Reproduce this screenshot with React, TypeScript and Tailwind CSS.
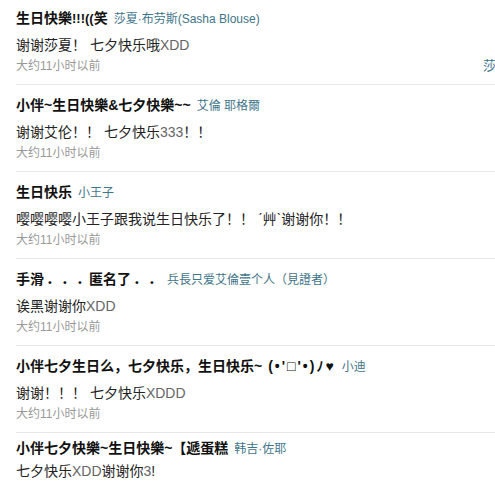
import React from "react";

type Item = {
  title: React.ReactNode;
  name: string;
  body: React.ReactNode;
  first?: boolean;
  last?: boolean;
  extra?: boolean;
};

const G = ({ children }: { children: React.ReactNode }) => (
  <span className="text-[#666]">{children}</span>
);

const Dot = () => <span className="inline-block w-[15px] pl-[2px] text-left">．</span>;

const items: Item[] = [
  {
    title: (
      <>
        生日快樂<span className="text-[13px]">!!!((</span>笑
      </>
    ),
    name: "莎夏·布劳斯(Sasha Blouse)",
    body: (
      <>
        谢谢莎夏！ 七夕快乐哦<G>XDD</G>
      </>
    ),
    first: true,
    extra: true,
  },
  {
    title: "小伴~生日快樂&七夕快樂~~",
    name: "艾倫 耶格爾",
    body: (
      <>
        谢谢艾伦！！ 七夕快乐<G>333</G>！！
      </>
    ),
  },
  {
    title: "生日快乐",
    name: "小王子",
    body: "嘤嘤嘤嘤小王子跟我说生日快乐了！！ ˊ艸ˋ谢谢你！！",
  },
  {
    title: (
      <>
        手滑
        <Dot />
        <Dot />
        <Dot />
        匿名了
        <Dot />
        <Dot />
      </>
    ),
    name: "兵長只爱艾倫壹个人（見證者）",
    body: (
      <>
        诶黑谢谢你<G>XDD</G>
      </>
    ),
  },
  {
    title: (
      <>
        小伴七夕生日么，七夕快乐，生日快乐~
        <span className="ml-[6px] text-[14px] tracking-[2px]">(•'□'•)ﾉ♥</span>
      </>
    ),
    name: "小迪",
    body: (
      <>
        谢谢！！！ 七夕快乐<G>XDDD</G>
      </>
    ),
  },
  {
    title: "小伴七夕快樂~生日快樂~【遞蛋糕",
    name: "韩吉·佐耶",
    body: (
      <>
        七夕快乐<G>XDD</G>谢谢你<G>3</G>!
      </>
    ),
    last: true,
  },
];

export default function App() {
  return (
    <div
      className="w-[495px] h-[487px] overflow-hidden bg-white"
      style={{ fontFamily: '"Liberation Sans", "Noto Sans CJK SC", sans-serif' }}
    >
      <div className="ml-4">
        {items.map((it, i) => (
          <div
            key={i}
            className={`${it.first ? "pt-[8px]" : it.last ? "pt-[5px]" : "pt-[10px]"} pb-[10px] border-b border-[#e8e8e8]`}
          >
            <div className="flex items-baseline h-5 leading-5 whitespace-nowrap">
              <span className="text-[14px] font-bold text-[#111]">{it.title}</span>
              <span className="ml-[6px] text-[12px] text-[#3f7589]">{it.name}</span>
            </div>
            <div
              className={`${it.last ? "mt-[3px]" : "mt-[7px]"} h-5 leading-5 text-[14px] text-[#222] whitespace-nowrap`}
            >
              {it.body}
            </div>
            <div
              className={`${it.last ? "mt-[12px]" : "mt-[3px]"} flex h-4 leading-4 text-[12px] text-[#999] whitespace-nowrap overflow-hidden`}
            >
              <span>大约11小时以前</span>
              {it.extra && (
                <span className="ml-auto mr-[-14px] text-[13px] text-[#3f7589]">莎夏</span>
              )}
            </div>
          </div>
        ))}
      </div>
    </div>
  );
}
